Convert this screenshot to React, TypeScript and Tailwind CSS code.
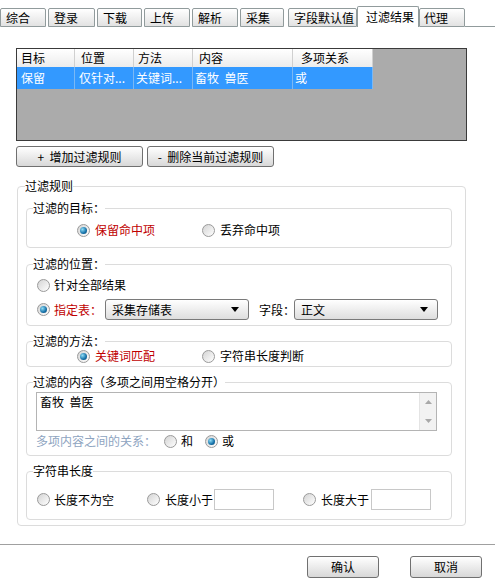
import React from 'react';

const FONT = "font-['Noto_Sans_CJK_SC','Noto_Sans',sans-serif]";

const TABS = [
    { label: '综合', w: 'w-[46px]', ml: 'ml-0' },
    { label: '登录', w: 'w-[47px]', ml: 'ml-[2px]' },
    { label: '下载', w: 'w-[45px]', ml: 'ml-[2px]' },
    { label: '上传', w: 'w-[46px]', ml: 'ml-[2px]' },
    { label: '解析', w: 'w-[46px]', ml: 'ml-[2px]' },
    { label: '采集', w: 'w-[44px]', ml: 'ml-[2px]' },
    { label: '字段默认值', w: 'w-[69px]', ml: 'ml-[4px]' },
];

const Radio = ({ checked }: { checked?: boolean }) => (
    <span className="inline-flex w-[13px] h-[13px] shrink-0 rounded-full border border-[#9a9a9a] bg-linear-to-br from-[#d4d4d4] to-white items-center justify-center">
        {checked && <span className="w-[7px] h-[7px] rounded-full bg-[radial-gradient(circle_at_35%_35%,#8fdcf5,#1470a8_60%,#0a3f66)]" />}
    </span>
);

const Arrow = () => (
    <svg width="8" height="5" viewBox="0 0 8 5" className="shrink-0">
        <polygon points="0,0 8,0 4,5" fill="#000" />
    </svg>
);

const Select = ({ value, w }: { value: string; w: string }) => (
    <div className={`${w} h-[21px] flex items-center justify-between pl-[6px] pr-[9px] border border-[#7a7a7a] rounded-[3px] bg-linear-to-b from-white to-[#dedede]`}>
        <span>{value}</span>
        <Arrow />
    </div>
);

const Button = ({ children, w }: { children: React.ReactNode; w: string }) => (
    <button className={`${w} h-[21px] flex items-center justify-center border border-[#707070] rounded-[3px] bg-linear-to-b from-white to-[#d8d8d8] text-[12px]`}>
        {children}
    </button>
);

const Group = ({ title, children, className }: { title: string; children: React.ReactNode; className: string }) => (
    <fieldset className={`w-[426px] border border-[#dcdcdc] rounded-[4px] pl-[10px] ${className}`}>
        <legend className="-ml-[4px] leading-[14px]">{title}</legend>
        {children}
    </fieldset>
);

const Input = ({ w }: { w: string }) => <div className={`${w} h-[21px] border border-[#c8c8c8] bg-white`} />;

export default function App() {
    return (
        <div className={`w-[495px] h-[585px] bg-white text-[12px] text-black overflow-hidden ${FONT}`}>
            {/* tab strip */}
            <div className="flex items-end h-[21px] mt-[6px]">
                {TABS.map(t => (
                    <div key={t.label} className={`${t.w} ${t.ml} h-[19px] pl-[5px] leading-[17px] border border-[#919b9c] rounded-t-[2px] bg-linear-to-b from-white to-[#e2e2e2]`}>
                        {t.label}
                    </div>
                ))}
                <div className="w-[62px] h-[21px] pl-[8px] leading-[20px] border border-b-0 border-[#919b9c] rounded-t-[2px] bg-white">过滤结果</div>
                <div className="w-[46px] h-[19px] pl-[4px] leading-[17px] border border-[#919b9c] rounded-t-[2px] bg-linear-to-b from-white to-[#e2e2e2]">代理</div>
                <div className="flex-1 h-[21px] border-b border-[#919b9c]" />
            </div>

            {/* rule list */}
            <div className="ml-[16px] mt-[21px] w-[451px] h-[93px] border border-[#3a3a3a] bg-[#ababab]">
                <div className="flex w-[356px] h-[18px] bg-linear-to-b from-white to-[#ececec] leading-[18px]">
                    <div className="w-[58px] pl-[4px] border-r border-[#d0d0d0]">目标</div>
                    <div className="w-[59px] pl-[6px] border-r border-[#d0d0d0]">位置</div>
                    <div className="w-[59px] pl-[4px] border-r border-[#d0d0d0]">方法</div>
                    <div className="w-[100px] pl-[6px] border-r border-[#d0d0d0]">内容</div>
                    <div className="w-[80px] pl-[8px] border-r border-[#d0d0d0]">多项关系</div>
                </div>
                <div className="flex w-[356px] h-[22px] bg-[#3399ff] text-white leading-[22px]">
                    <div className="w-[58px] pl-[4px] border-r border-[#7ab8f5]">保留</div>
                    <div className="w-[59px] pl-[4px] border-r border-[#7ab8f5]">仅针对...</div>
                    <div className="w-[59px] pl-[2px] border-r border-[#7ab8f5]">关键词...</div>
                    <div className="w-[100px] pl-[2px] border-r border-[#7ab8f5] whitespace-pre">畜牧  兽医</div>
                    <div className="w-[80px] pl-[2px] border-r border-[#7ab8f5]">或</div>
                </div>
            </div>

            <div className="flex gap-[4px] ml-[16px] mt-[5px]">
                <Button w="w-[127px]">+&nbsp;&nbsp;增加过滤规则</Button>
                <Button w="w-[127px]">-&nbsp;&nbsp;删除当前过滤规则</Button>
            </div>

            {/* rule editor */}
            <fieldset className="ml-[17px] mt-[12px] w-[449px] border border-[#dcdcdc] rounded-[4px] pl-[8px] pt-[8px] pb-[5px]">
                <legend className="-ml-[1px] leading-[14px]">过滤规则</legend>
                <div className="flex flex-col gap-[9px]">
                    <Group title="过滤的目标：" className="pb-[9px]">
                        <div className="flex items-center h-[16px] mt-[7px] ml-[40px]">
                            <div className="w-[125px] flex items-center gap-[5px]"><Radio checked /><span className="text-[#c00000]">保留命中项</span></div>
                            <div className="flex items-center gap-[5px]"><Radio /><span>丢弃命中项</span></div>
                        </div>
                    </Group>

                    <Group title="过滤的位置：" className="pb-[5px]">
                        <div className="flex items-center h-[16px] mt-[6px] gap-[4px]"><Radio /><span>针对全部结果</span></div>
                        <div className="flex items-center h-[21px] mt-[6px]">
                            <Radio checked />
                            <span className="ml-[4px] w-[51px] text-[#c00000] whitespace-nowrap">指定表：</span>
                            <Select value="采集存储表" w="w-[144px]" />
                            <span className="ml-[10px] w-[35px] whitespace-nowrap">字段：</span>
                            <Select value="正文" w="w-[144px]" />
                        </div>
                    </Group>

                    <Group title="过滤的方法：" className="pb-[2px] -mt-[1px]">
                        <div className="flex items-center h-[16px] ml-[40px]">
                            <div className="w-[125px] flex items-center gap-[5px]"><Radio checked /><span className="text-[#c00000]">关键词匹配</span></div>
                            <div className="flex items-center gap-[5px]"><Radio /><span>字符串长度判断</span></div>
                        </div>
                    </Group>

                    <Group title="过滤的内容（多项之间用空格分开）" className="pb-[6px] -mt-[1px]">
                        <div className="flex w-[401px] h-[39px] mt-[3px] -ml-[1px] border border-[#b4b4b4]">
                            <div className="flex-1 pl-[3px] pt-[1px] leading-[16px] whitespace-pre">畜牧  兽医</div>
                            <div className="w-[17px] flex flex-col items-center justify-between py-[7px] bg-[#f2f2f2] border-l border-[#e4e4e4]">
                                <svg width="7" height="4" viewBox="0 0 7 4"><polygon points="0,4 7,4 3.5,0" fill="#a8a8a8" /></svg>
                                <svg width="7" height="4" viewBox="0 0 7 4"><polygon points="0,0 7,0 3.5,4" fill="#a8a8a8" /></svg>
                            </div>
                        </div>
                        <div className="flex items-center h-[16px] mt-[2px] -ml-[1px]">
                            <span className="w-[128px] text-[#8ea4bf] whitespace-nowrap">多项内容之间的关系：</span>
                            <Radio /><span className="ml-[4px] w-[24px]">和</span>
                            <Radio checked /><span className="ml-[4px]">或</span>
                        </div>
                    </Group>

                    <Group title="字符串长度" className="pb-[9px] -mt-[1px]">
                        <div className="flex items-center h-[21px] mt-[11px]">
                            <Radio /><span className="ml-[4px] w-[93px]">长度不为空</span>
                            <Radio /><span className="ml-[5px] w-[49px]">长度小于</span>
                            <Input w="w-[60px]" />
                            <span className="w-[29px]" />
                            <Radio /><span className="ml-[5px] w-[50px]">长度大于</span>
                            <Input w="w-[60px]" />
                        </div>
                    </Group>
                </div>
            </fieldset>

            <div className="mt-[18px] h-[1px] bg-[#a0a0a0]" />
            <div className="flex justify-end gap-[31px] mt-[11px] pr-[13px]">
                <Button w="w-[72px] h-[22px]">确认</Button>
                <Button w="w-[72px] h-[22px]">取消</Button>
            </div>
        </div>
    );
}
